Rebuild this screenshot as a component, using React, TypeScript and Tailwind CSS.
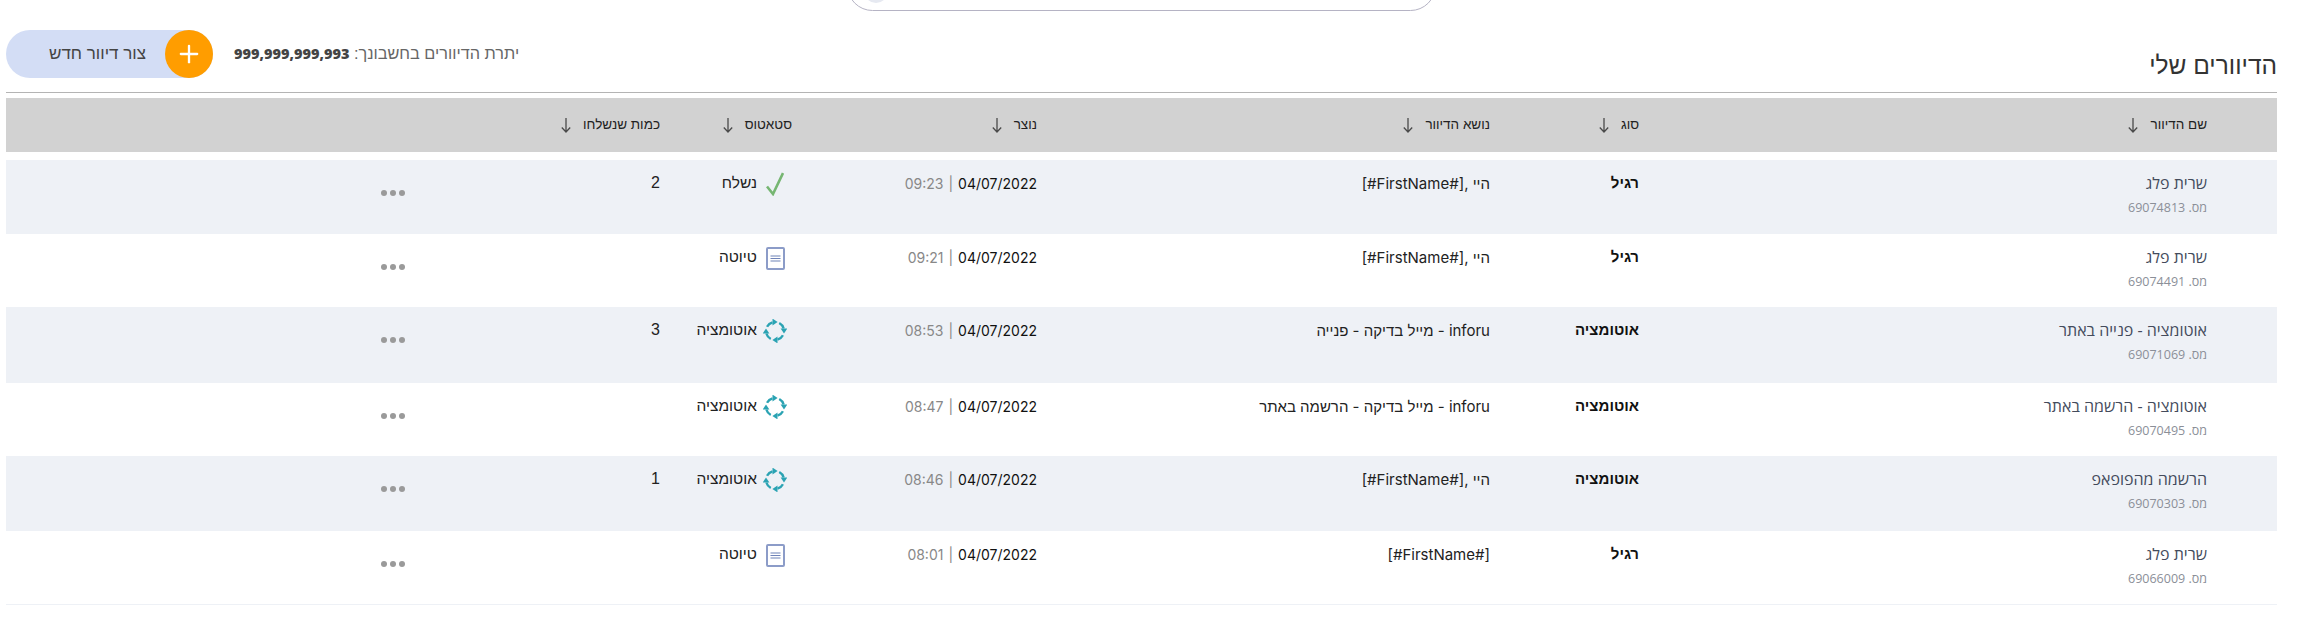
import React from 'react';
import { Plus } from 'lucide-react';

type Row = {
  name: string;
  id: string;
  type: string;
  subject: string;
  date: string;
  time: string;
  status: 'sent' | 'draft' | 'auto';
  count?: string;
  height: string;
};

const rows: Row[] = [
  { name: 'שרית פלג', id: '69074813', type: 'רגיל', subject: 'היי ,[#FirstName#]', date: '04/07/2022', time: '09:23', status: 'sent', count: '2', height: 'h-[74px]' },
  { name: 'שרית פלג', id: '69074491', type: 'רגיל', subject: 'היי ,[#FirstName#]', date: '04/07/2022', time: '09:21', status: 'draft', height: 'h-[73px]' },
  { name: 'אוטומציה - פנייה באתר', id: '69071069', type: 'אוטומציה', subject: 'inforu - מייל בדיקה - פנייה', date: '04/07/2022', time: '08:53', status: 'auto', count: '3', height: 'h-[76px]' },
  { name: 'אוטומציה - הרשמה באתר', id: '69070495', type: 'אוטומציה', subject: 'inforu - מייל בדיקה - הרשמה באתר', date: '04/07/2022', time: '08:47', status: 'auto', height: 'h-[73px]' },
  { name: 'הרשמה מהפופאפ', id: '69070303', type: 'אוטומציה', subject: 'היי ,[#FirstName#]', date: '04/07/2022', time: '08:46', status: 'auto', count: '1', height: 'h-[75px]' },
  { name: 'שרית פלג', id: '69066009', type: 'רגיל', subject: '[#FirstName#]', date: '04/07/2022', time: '08:01', status: 'draft', height: 'h-[73px]' },
];

const gridCols = 'grid grid-cols-[638px_149px_453px_245px_132px_255px_1fr]';

const SortArrow = () => (
  <svg width="10" height="15" viewBox="0 0 10 15" fill="none" className="shrink-0">
    <path d="M5 0v14M.8 9.5 5 14l4.2-4.5" stroke="#4a4a4a" strokeWidth="1.3" />
  </svg>
);

const SentIcon = () => (
  <svg width="18" height="24" viewBox="0 0 18 24" fill="none">
    <path d="M1 14.5 7 22 17 1" stroke="#76b672" strokeWidth="2.6" />
  </svg>
);

const DraftIcon = () => (
  <svg width="19" height="23" viewBox="0 0 19 23">
    <rect x="1" y="1" width="17" height="21" rx="1" fill="#fff" stroke="#8c9cc8" strokeWidth="2" />
    <path d="M4.5 9h10M4.5 11.5h10M4.5 14h10" stroke="#6f83b8" strokeWidth="1.2" />
  </svg>
);

const AutoIcon = () => (
  <svg width="24" height="24" viewBox="0 0 24 24" fill="none">
    {[0, 90, 180, 270].map((deg) => (
      <g key={deg} transform={`rotate(${deg} 12 12)`}>
        <path d="M4.05 7.77A9 9 0 0 1 9.5 3.35" stroke="#2ba3b3" strokeWidth="2.4" />
        <path d="M9.5 -.4 14.6 3 9.5 6.4z" fill="#2ba3b3" />
      </g>
    ))}
  </svg>
);

const statusLabels = { sent: 'נשלח', draft: 'טיוטה', auto: 'אוטומציה' };

const StatusCell = ({ status }: { status: Row['status'] }) => (
  <div className="flex items-center gap-[6px] h-[24px] -mt-[2px] pr-[5px] text-[15.5px]">
    <span className="flex items-center justify-center w-[24px] h-[24px] shrink-0">
      {status === 'sent' && <SentIcon />}
      {status === 'draft' && <DraftIcon />}
      {status === 'auto' && <AutoIcon />}
    </span>
    <span className="-mt-[3px]">{statusLabels[status]}</span>
  </div>
);

const HeaderCell = ({ label, className = '' }: { label: string; className?: string }) => (
  <div className={`flex items-center gap-[12px] ${className}`}>
    <span>{label}</span>
    <SortArrow />
  </div>
);

export default function App() {
  return (
    <div dir="rtl" className="relative w-[2321px] h-[632px] bg-white text-[#222] overflow-hidden font-['Liberation_Sans',sans-serif]">
      {/* search box cut off by the top of the page */}
      <div className="absolute top-[-40px] left-[847px] w-[589px] h-[51px] rounded-[26px] border border-[#b5b3c4] bg-white overflow-hidden">
        <div className="absolute bottom-[7px] left-[16px] w-[24px] h-[24px] rounded-full bg-[#e6e9f1]" />
      </div>

      <div className="pr-[44px] pl-[6px]">
        <div className="flex items-end justify-between h-[93px] border-b border-[#b4b4b4]">
          <h1 className="text-[24.5px] font-normal text-[#333] pb-[14px] leading-none">הדיוורים שלי</h1>
          <div className="flex items-center gap-[21px] pb-[14px]">
            <div className="text-[16.3px] text-[#666] -mt-[2px] leading-[20px]">
              יתרת הדיוורים בחשבונך: <b className="text-[14.5px] font-extrabold text-[#444] font-['Open_Sans',sans-serif]">999,999,999,993</b>
            </div>
            <button className="flex items-center h-[48px] w-[207px] rounded-full bg-[#d3ddf5] text-[17px] text-[#444]">
              <span className="flex items-center justify-center w-[48px] h-[48px] rounded-full bg-[#ff9d00] text-white">
                <Plus className="w-[28px] h-[28px]" strokeWidth={2} />
              </span>
              <span className="mr-[19px]">צור דיוור חדש</span>
            </button>
          </div>
        </div>

        <div className={`${gridCols} items-center h-[54px] mt-[5px] bg-[#d2d2d2] text-[13.5px] text-[#222]`}>
          <HeaderCell label="שם הדיוור" className="pr-[70px]" />
          <HeaderCell label="סוג" />
          <HeaderCell label="נושא הדיוור" />
          <HeaderCell label="נוצר" />
          <HeaderCell label="סטאטוס" />
          <HeaderCell label="כמות שנשלחו" />
          <div />
        </div>

        <div className="mt-[8px] border-b border-[#eef1f6]">
          {rows.map((row, i) => (
            <div key={row.id} className={`${gridCols} ${row.height} items-start pt-[14px] ${i % 2 === 0 ? 'bg-[#eef1f6]' : 'bg-white'}`}>
              <div className="pr-[70px]">
                <div className="text-[16px] leading-[18px] text-[#444b5c] font-['Open_Sans',sans-serif]">{row.name}</div>
                <div className="mt-[9px] text-[12.5px] leading-[14px] text-[#8b8f98] font-['Open_Sans',sans-serif]">מס. {row.id}</div>
              </div>
              <div className="font-bold text-[15px] leading-[18px] text-[#111]">{row.type}</div>
              <div className="mt-[1px] text-[15px] leading-[18px] font-['Inter','Liberation_Sans',sans-serif]">{row.subject}</div>
              <div dir="ltr" className="flex justify-end gap-[5px] mt-[1px] text-[14px] leading-[18px] font-['Inter',sans-serif]">
                <span className="text-[#888]">{row.time}</span>
                <span className="text-[#888]">|</span>
                <span className="text-[#111]">{row.date}</span>
              </div>
              <div className="leading-[18px]"><StatusCell status={row.status} /></div>
              <div className="text-[16px] leading-[18px]">{row.count}</div>
              <div className="flex gap-[3px] mt-[16px]">
                <span className="w-[6px] h-[6px] rounded-full bg-[#9a9a9a]" />
                <span className="w-[6px] h-[6px] rounded-full bg-[#9a9a9a]" />
                <span className="w-[6px] h-[6px] rounded-full bg-[#9a9a9a]" />
              </div>
            </div>
          ))}
        </div>
      </div>
    </div>
  );
}
